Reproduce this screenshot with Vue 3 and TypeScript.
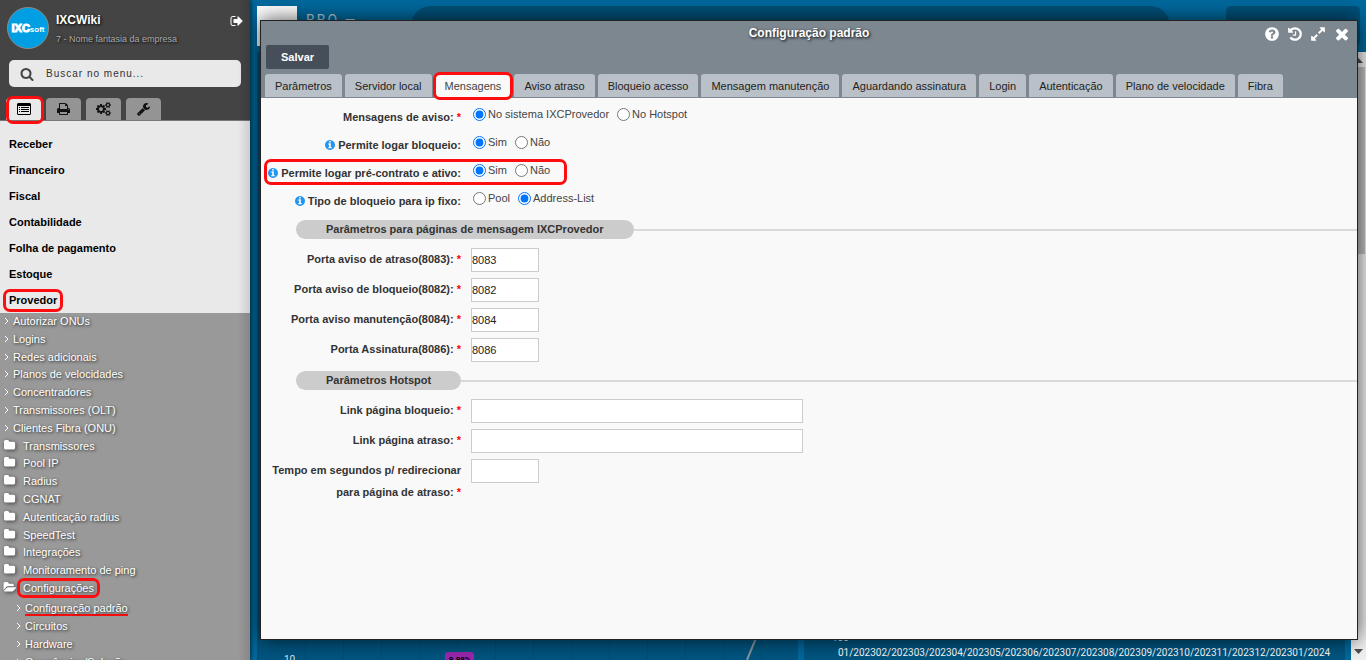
<script setup lang="ts">
import { ref } from 'vue'

interface MenuLink {
  label: string
  icon: 'arrow' | 'folder' | 'open'
  marked?: boolean
}

interface RadioRow {
  name: string
  label: string
  required?: boolean
  info?: boolean
  marked?: boolean
  options: string[]
}

interface FieldRow {
  id: string
  label: string
  wide?: boolean
}

const circle =
  'm640 416q0 209-103 385.5t-279.5 279.5-385.5 103-385.5-103-279.5-279.5-103-385.5 103-385.5 279.5-279.5 385.5-103 385.5 103 279.5 279.5 103 385.5z'

const icons = {
  exit: 'M704 1440q0 4 1 20t.5 26.5-3 23.5-10 19.5-20.5 6.5h-320q-119 0-203.5-84.5t-84.5-203.5v-704q0-119 84.5-203.5t203.5-84.5h320q13 0 22.5 9.5t9.5 22.5q0 4 1 20t.5 26.5-3 23.5-10 19.5-20.5 6.5h-320q-66 0-113 47t-47 113v704q0 66 47 113t113 47h312l11.5 1 11.5 3 8 5.5 7 9 2 13.5zm928-544q0 26-19 45l-544 544q-19 19-45 19t-45-19-19-45v-288h-448q-26 0-45-19t-19-45v-384q0-26 19-45t45-19h448v-288q0-26 19-45t45-19 45 19l544 544q19 19 19 45z',
  search:
    'M1216 832q0-185-131.5-316.5t-316.5-131.5-316.5 131.5-131.5 316.5 131.5 316.5 316.5 131.5 316.5-131.5 131.5-316.5zm512 832q0 52-38 90t-90 38q-54 0-90-38l-343-342q-179 124-399 124-143 0-273.5-55.5t-225-150-150-225-55.5-273.5 55.5-273.5 150-225 225-150 273.5-55.5 273.5 55.5 225 150 150 225 55.5 273.5q0 220-124 399l343 343q37 37 37 90z',
  folder:
    'M1728 608v704q0 92-66 158t-158 66h-1216q-92 0-158-66t-66-158v-960q0-92 66-158t158-66h320q92 0 158 66t66 158v32h672q92 0 158 66t66 158z',
  open: 'M1879 952q0 31-31 66l-336 396q-43 51-120.5 86.5t-143.5 35.5h-1088q-34 0-60.5-13t-26.5-43q0-31 31-66l336-396q43-51 120.5-86.5t143.5-35.5h1088q34 0 60.5 13t26.5 43zm-343-344v160h-832q-94 0-197 47.5t-164 119.5l-337 396-5 6q0-4-.5-12.5t-.5-12.5v-960q0-92 66-158t158-66h320q92 0 158 66t66 158v32h544q92 0 158 66t66 158z',
  print:
    'M448 1536h896v-256h-896v256zm0-640h896v-384h-160q-40 0-68-28t-28-68v-160h-640v640zm1152 64q0-26-19-45t-45-19-45 19-19 45 19 45 45 19 45-19 19-45zm128 0v416q0 13-9.5 22.5t-22.5 9.5h-224v160q0 40-28 68t-68 28h-960q-40 0-68-28t-28-68v-160h-224q-13 0-22.5-9.5t-9.5-22.5v-416q0-79 56.5-135.5t135.5-56.5h64v-544q0-40 28-68t68-28h672q40 0 88 20t76 48l152 152q28 28 48 76t20 88v256h64q79 0 135.5 56.5t56.5 135.5z',
  wrench:
    'M448 1472q0-26-19-45t-45-19-45 19-19 45 19 45 45 19 45-19 19-45zm644-420l-682 682q-37 37-90 37-52 0-91-37l-106-108q-38-36-38-90 0-53 38-91l681-681q39 98 114.5 173.5t173.5 114.5zm634-435q0 39-23 106-47 134-164.5 217.5t-258.5 83.5q-185 0-316.5-131.5t-131.5-316.5 131.5-316.5 316.5-131.5q58 0 121.5 16.5t107.5 46.5q16 11 16 28t-16 28l-293 169v224l193 107q5-3 79-48.5t135.5-81 70.5-35.5q15 0 23.5 10t8.5 25z',
  cogs: 'M896 896q0-106-75-181t-181-75-181 75-75 181 75 181 181 75 181-75 75-181zm768 512q0-52-38-90t-90-38-90 38-38 90q0 53 37.5 90.5t90.5 37.5 90.5-37.5 37.5-90.5zm0-1024q0-52-38-90t-90-38-90 38-38 90q0 53 37.5 90.5t90.5 37.5 90.5-37.5 37.5-90.5zm-384 421v185q0 10-7 19.5t-16 10.5l-155 24q-11 35-32 76 34 48 90 115 7 11 7 20 0 12-7 19-23 30-82.5 89.5t-78.5 59.5q-11 0-21-7l-115-90q-37 19-77 31-11 108-23 155-7 24-30 24h-186q-11 0-20-7.5t-10-17.5l-23-153q-34-10-75-31l-118 89q-7 7-20 7-11 0-21-8-144-133-144-160 0-9 7-19 10-14 41-53t47-61q-23-44-35-82l-152-24q-10-1-17-9.5t-7-19.5v-185q0-10 7-19.5t16-10.5l155-24q11-35 32-76-34-48-90-115-7-11-7-20 0-12 7-20 22-30 82-89t79-59q11 0 21 7l115 90q34-18 77-32 11-108 23-154 7-24 30-24h186q11 0 20 7.5t10 17.5l23 153q34 10 75 31l118-89q8-7 20-7 11 0 21 8 144 133 144 160 0 8-7 19-12 16-42 54t-45 60q23 48 34 82l152 23q10 2 17 10.5t7 19.5zm640 533v140q0 16-149 31-12 27-30 52 51 113 51 138 0 4-4 7-122 71-124 71-8 0-46-47t-52-68q-20 2-30 2t-30-2q-14 21-52 68t-46 47q-2 0-124-71-4-3-4-7 0-25 51-138-18-25-30-52-149-15-149-31v-140q0-16 149-31 13-29 30-52-51-113-51-138 0-4 4-7 4-2 35-20t59-34 30-16q8 0 46 46.5t52 67.5q20-2 30-2t30 2q51-71 92-112l6-2q4 0 124 70 4 3 4 7 0 25-51 138 17 23 30 52 149 15 149 31zm0-1024v140q0 16-149 31-12 27-30 52 51 113 51 138 0 4-4 7-122 71-124 71-8 0-46-47t-52-68q-20 2-30 2t-30-2q-14 21-52 68t-46 47q-2 0-124-71-4-3-4-7 0-25 51-138-18-25-30-52-149-15-149-31v-140q0-16 149-31 13-29 30-52-51-113-51-138 0-4 4-7 4-2 35-20t59-34 30-16q8 0 46 46.5t52 67.5q20-2 30-2t30 2q51-71 92-112l6-2q4 0 124 70 4 3 4 7 0 25-51 138 17 23 30 52 149 15 149 31z',
  info:
    'M1152 1376v-160q0-14-9-23t-23-9h-96v-512q0-14-9-23t-23-9h-320q-14 0-23 9t-9 23v160q0 14 9 23t23 9h96v320h-96q-14 0-23 9t-9 23v160q0 14 9 23t23 9h448q14 0 23-9t9-23zm-128-896v-160q0-14-9-23t-23-9h-192q-14 0-23 9t-9 23v160q0 14 9 23t23 9h192q14 0 23-9t9-23z' +
    circle,
  help: 'M1024 1376v-192q0-14-9-23t-23-9h-192q-14 0-23 9t-9 23v192q0 14 9 23t23 9h192q14 0 23-9t9-23zm256-672q0-88-55.5-163t-138.5-116-170-41q-243 0-371 213-15 24 8 42l132 100q7 6 19 6 16 0 25-12 53-68 86-92 34-24 86-24 48 0 85.5 26t37.5 59q0 38-20 61t-68 45q-63 28-115.5 86.5t-52.5 125.5v36q0 14 9 23t23 9h192q14 0 23-9t9-23q0-19 21.5-49.5t54.5-49.5q32-18 49-28.5t46-35 44.5-48 28-60.5 12.5-81zm384 192q0 209-103 385.5t-279.5 279.5-385.5 103-385.5-103-279.5-279.5-103-385.5 103-385.5 279.5-279.5 385.5-103 385.5 103 279.5 279.5 103 385.5z',
  history:
    'M1664 896q0 156-61 298t-164 245-245 164-298 61q-172 0-327-72.5t-264-204.5q-7-10-6.5-22.5t8.5-20.5l137-138q10-9 25-9 16 2 23 12 73 95 179 147t225 52q104 0 198.5-40.5t163.5-109.5 109.5-163.5 40.5-198.5-40.5-198.5-109.5-163.5-163.5-109.5-198.5-40.5q-98 0-188 35.5t-160 101.5l137 138q31 30 14 69-17 40-59 40h-448q-26 0-45-19t-19-45v-448q0-42 40-59 39-17 69 14l130 129q107-101 244.5-156.5t284.5-55.5q156 0 298 61t245 164 164 245 61 298zm-640-288v448q0 14-9 23t-23 9h-320q-14 0-23-9t-9-23v-64q0-14 9-23t23-9h224v-352q0-14 9-23t23-9h64q14 0 23 9t9 23z',
  expand:
    'M883 1056q0 13-10 23l-332 332 144 144q19 19 19 45t-19 45-45 19h-448q-26 0-45-19t-19-45v-448q0-26 19-45t45-19 45 19l144 144 332-332q10-10 23-10t23 10l114 114q10 10 10 23zm781-864v448q0 26-19 45t-45 19-45-19l-144-144-332 332q-10 10-23 10t-23-10l-114-114q-10-10-10-23t10-23l332-332-144-144q-19-19-19-45t19-45 45-19h448q26 0 45 19t19 45z',
  close:
    'M1490 1322q0 40-28 68l-136 136q-28 28-68 28t-68-28l-294-294-294 294q-28 28-68 28t-68-28l-136-136q-28-28-28-68t28-68l294-294-294-294q-28-28-28-68t28-68l136-136q28-28 68-28t68 28l294 294 294-294q28-28 68-28t68 28l136 136q28 28 28 68t-28 68l-294 294 294 294q28 28 28 68z',
}

const modules = ['Receber', 'Financeiro', 'Fiscal', 'Contabilidade', 'Folha de pagamento', 'Estoque', 'Provedor']

const links: MenuLink[] = [
  { label: 'Autorizar ONUs', icon: 'arrow' },
  { label: 'Logins', icon: 'arrow' },
  { label: 'Redes adicionais', icon: 'arrow' },
  { label: 'Planos de velocidades', icon: 'arrow' },
  { label: 'Concentradores', icon: 'arrow' },
  { label: 'Transmissores (OLT)', icon: 'arrow' },
  { label: 'Clientes Fibra (ONU)', icon: 'arrow' },
  { label: 'Transmissores', icon: 'folder' },
  { label: 'Pool IP', icon: 'folder' },
  { label: 'Radius', icon: 'folder' },
  { label: 'CGNAT', icon: 'folder' },
  { label: 'Autenticação radius', icon: 'folder' },
  { label: 'SpeedTest', icon: 'folder' },
  { label: 'Integrações', icon: 'folder' },
  { label: 'Monitoramento de ping', icon: 'folder' },
  { label: 'Configurações', icon: 'open', marked: true },
]

const subLinks = ['Configuração padrão', 'Circuitos', 'Hardware', 'Ocorrências/Solução']

const tabs = [
  'Parâmetros',
  'Servidor local',
  'Mensagens',
  'Aviso atraso',
  'Bloqueio acesso',
  'Mensagem manutenção',
  'Aguardando assinatura',
  'Login',
  'Autenticação',
  'Plano de velocidade',
  'Fibra',
]
const activeTab = ref('Mensagens')

const radioRows: RadioRow[] = [
  { name: 'aviso', label: 'Mensagens de aviso:', required: true, options: ['No sistema IXCProvedor', 'No Hotspot'] },
  { name: 'bloqueio', label: 'Permite logar bloqueio:', info: true, options: ['Sim', 'Não'] },
  { name: 'precontrato', label: 'Permite logar pré-contrato e ativo:', info: true, marked: true, options: ['Sim', 'Não'] },
  { name: 'ipfixo', label: 'Tipo de bloqueio para ip fixo:', info: true, options: ['Pool', 'Address-List'] },
]
const choices = ref<Record<string, string>>({
  aviso: 'No sistema IXCProvedor',
  bloqueio: 'Sim',
  precontrato: 'Sim',
  ipfixo: 'Address-List',
})

const ports: FieldRow[] = [
  { id: 'porta8083', label: 'Porta aviso de atraso(8083):' },
  { id: 'porta8082', label: 'Porta aviso de bloqueio(8082):' },
  { id: 'porta8084', label: 'Porta aviso manutenção(8084):' },
  { id: 'porta8086', label: 'Porta Assinatura(8086):' },
]
const hotspot: FieldRow[] = [
  { id: 'linkBloqueio', label: 'Link página bloqueio:', wide: true },
  { id: 'linkAtraso', label: 'Link página atraso:', wide: true },
  { id: 'tempo', label: 'Tempo em segundos p/ redirecionar para página de atraso:' },
]
const groups = [
  { title: 'Parâmetros para páginas de mensagem IXCProvedor', rows: ports },
  { title: 'Parâmetros Hotspot', rows: hotspot },
]
const values = ref<Record<string, string>>({
  porta8083: '8083',
  porta8082: '8082',
  porta8084: '8084',
  porta8086: '8086',
  linkBloqueio: '',
  linkAtraso: '',
  tempo: '',
})

const months = [
  '01/2023', '02/2023', '03/2023', '04/2023', '05/2023', '06/2023', '07/2023',
  '08/2023', '09/2023', '10/2023', '11/2023', '12/2023', '01/2024',
]
const windowActions = [
  { icon: icons.help, label: 'Ajuda' },
  { icon: icons.history, label: 'Histórico' },
  { icon: icons.expand, label: 'Expandir' },
  { icon: icons.close, label: 'Fechar', big: true },
]
</script>

<template>
  <div class="app">
    <aside class="sidebar">
      <header class="side-top">
        <div class="user">
          <div class="avatar"><span class="brand">IXC</span><span class="brand-small">soft</span></div>
          <div class="user-text">
            <strong>IXCWiki</strong>
            <span>7 - Nome fantasia da empresa</span>
          </div>
          <button class="icon-btn exit" aria-label="Sair">
            <svg viewBox="0 0 1792 1792"><path :d="icons.exit" /></svg>
          </button>
        </div>
        <div class="search">
          <svg viewBox="0 0 1792 1792"><path :d="icons.search" /></svg>
          <input type="text" placeholder="Buscar no menu..." aria-label="Buscar no menu" />
        </div>
        <div class="side-tabs">
          <button class="side-tab current ring" aria-label="Menu">
            <svg class="list-icon" viewBox="0 0 14 12">
              <path fill-rule="evenodd" d="M1 0h12l1 1v10l-1 1H1l-1-1V1zM1 3v8h12V3z" />
              <path d="M2 4h1v1H2zM4 4h8v1H4zM2 6h1v1H2zM4 6h8v1H4zM2 8h1v1H2zM4 8h8v1H4z" />
            </svg>
          </button>
          <button class="side-tab" aria-label="Imprimir">
            <svg viewBox="0 0 1792 1792"><path :d="icons.print" /></svg>
          </button>
          <button class="side-tab" aria-label="Ajustes">
            <svg viewBox="0 0 1920 1792"><path :d="icons.cogs" /></svg>
          </button>
          <button class="side-tab" aria-label="Ferramentas">
            <svg viewBox="0 0 1792 1792"><path :d="icons.wrench" /></svg>
          </button>
        </div>
      </header>
      <nav class="side-menu">
        <ul class="modules">
          <li v-for="m in modules" :key="m">
            <a href="#" :class="{ ring: m === 'Provedor', roomy: m === 'Provedor' }">{{ m }}</a>
          </li>
        </ul>
        <div class="branch">
          <ul class="links">
            <li v-for="l in links" :key="l.label" :class="l.icon">
              <svg v-if="l.icon === 'arrow'" class="chevron" viewBox="0 0 5 8"><path d="M1 1l3 3-3 3" /></svg>
              <svg v-else class="folder-icon" viewBox="64 128 1792 1792">
                <path :d="l.icon === 'open' ? icons.open : icons.folder" />
              </svg>
              <a href="#" :class="{ ring: l.marked }">{{ l.label }}</a>
            </li>
          </ul>
          <ul class="sub-links">
            <li v-for="(s, i) in subLinks" :key="s">
              <svg class="chevron" viewBox="0 0 5 8"><path d="M1 1l3 3-3 3" /></svg>
              <a href="#" :class="{ underlined: i === 0 }">{{ s }}</a>
            </li>
          </ul>
        </div>
      </nav>
    </aside>

    <main class="workspace">
      <div class="dashboard">
        <div class="dash-top">
          <div class="dash-logo"></div>
          <span class="dash-name">BBO —</span>
          <div class="dash-search"></div>
          <div class="dash-user"></div>
        </div>
        <div class="dash-body">
          <div class="charts">
            <section class="chart chart-left">
              <div class="chart-grid"></div>
              <div class="chart-foot">
                <span class="tick">10</span>
                <span class="badge">9.98%</span>
                <svg class="trend" viewBox="0 0 12 22"><path d="M10 0L1 22" /></svg>
              </div>
            </section>
            <section class="chart">
              <div class="chart-grid"></div>
              <div class="axis">
                <span class="axis-zero">100</span>
                <div class="months"><span v-for="m in months" :key="m">{{ m }}</span></div>
              </div>
            </section>
          </div>
          <div class="scroll">
            <svg viewBox="0 0 9 5"><path d="M0 5L4.500 0 9 5z" /></svg>
            <div class="thumb"></div>
            <svg class="down" viewBox="0 0 9 5"><path d="M0 0L4.500 5 9 0z" /></svg>
          </div>
        </div>
      </div>

      <section class="window" role="dialog" aria-labelledby="window-title">
        <header class="window-top">
          <div class="title-bar">
            <h1 id="window-title">Configuração padrão</h1>
            <div class="actions">
              <button v-for="a in windowActions" :key="a.label" class="icon-btn" :class="{ big: a.big }" :aria-label="a.label">
                <svg viewBox="0 0 1792 1792"><path :d="a.icon" /></svg>
              </button>
            </div>
          </div>
          <button class="save">Salvar</button>
          <div class="tabs" role="tablist">
            <button
              v-for="t in tabs"
              :key="t"
              class="tab"
              role="tab"
              :aria-selected="t === activeTab"
              :class="{ active: t === activeTab, ring: t === activeTab }"
              @click="activeTab = t"
            >
              {{ t }}
            </button>
          </div>
        </header>

        <form class="form" @submit.prevent>
          <div class="radios">
            <div v-for="r in radioRows" :key="r.name" class="radio-row">
              <div class="radio-inner" :class="{ marked: r.marked }" role="radiogroup" :aria-labelledby="r.name + '-label'">
                <span :id="r.name + '-label'" class="label">
                  <svg v-if="r.info" class="info" viewBox="128 128 1536 1536"><path :d="icons.info" /></svg>
                  <span>{{ r.label }}<span v-if="r.required" class="star"> *</span></span>
                </span>
                <div class="options">
                  <label v-for="o in r.options" :key="o">
                    <input v-model="choices[r.name]" type="radio" :name="r.name" :value="o" />{{ o }}
                  </label>
                </div>
              </div>
            </div>
          </div>
          <section v-for="g in groups" :key="g.title">
            <h2 class="divider"><span>{{ g.title }}</span></h2>
            <div v-for="f in g.rows" :key="f.id" class="field">
              <label class="label" :for="f.id">{{ f.label }}<span class="star"> *</span></label>
              <input :id="f.id" v-model="values[f.id]" type="text" :class="{ wide: f.wide }" />
            </div>
          </section>
        </form>
      </section>
    </main>
  </div>
</template>

<style>
body {
  margin: 0;
  overflow: hidden;
}
</style>

<style scoped>
.app {
  display: flex;
  height: 100vh;
  overflow: hidden;
  font: 11px "Liberation Sans", Arial, sans-serif;
  color: #333;
}
.app * {
  box-sizing: border-box;
}
button,
input {
  font: inherit;
  color: inherit;
}
button {
  border: 0;
  padding: 0;
  background: none;
  cursor: pointer;
}
a {
  color: inherit;
  text-decoration: none;
}
ul {
  list-style: none;
  margin: 0;
  padding: 0;
}
svg {
  display: block;
  fill: currentColor;
  flex: none;
}
.ring {
  position: relative;
}
.ring::after {
  content: "";
  position: absolute;
  inset: -2px;
  border: 3px solid #fd0d0d;
  border-radius: 7px;
  pointer-events: none;
}

/* Sidebar */
.sidebar {
  width: 250px;
  flex: none;
  display: flex;
  flex-direction: column;
  position: relative;
  z-index: 1;
  background: #e9e9e9;
  box-shadow: 1px 0 4px rgba(0, 0, 0, 0.6);
}
.sidebar::after {
  content: "";
  position: absolute;
  inset: 0 0 0 auto;
  width: 12px;
  background: linear-gradient(to right, transparent, rgba(0, 0, 0, 0.12));
  pointer-events: none;
}
.side-top {
  background: #444;
  border-bottom: 1px solid #777;
  flex: none;
}
.user {
  display: flex;
  padding: 7px 6px 0 7px;
  height: 60px;
}
.avatar {
  width: 42px;
  height: 42px;
  border-radius: 50%;
  background: #009fe3;
  border: 1px solid #8a8a8a;
  color: #fff;
  display: flex;
  align-items: baseline;
  justify-content: center;
  line-height: 40px;
  flex: none;
}
.brand {
  font-size: 11px;
  font-weight: bold;
  -webkit-text-stroke: 1px #fff;
}
.brand-small {
  font-size: 8px;
  font-weight: bold;
}
.user-text {
  flex: 1;
  padding: 4px 0 0 7px;
  display: flex;
  flex-direction: column;
  text-shadow: 1px 1px 3px #000;
}
.user-text strong {
  font-size: 12px;
  line-height: 18px;
  color: #fff;
}
.user-text span {
  font-size: 9px;
  line-height: 20px;
  color: #aaa;
}
.icon-btn {
  width: 16px;
  height: 16px;
  color: #fff;
}
.icon-btn svg {
  width: 16px;
  height: 16px;
}
.exit {
  width: 14px;
  margin-top: 6px;
}
.exit svg {
  width: 14px;
}
.search {
  display: flex;
  align-items: center;
  gap: 12px;
  height: 27px;
  margin: 0 9px;
  padding: 0 11px;
  background: #e9e9e9;
  border-radius: 5px;
  color: #444;
}
.search svg {
  width: 14px;
  height: 14px;
}
.search input {
  flex: 1;
  min-width: 0;
  border: 0;
  padding: 0;
  background: none;
  outline: 0;
  font-size: 10px;
  letter-spacing: 1px;
}
.search input::placeholder {
  color: #333;
  opacity: 1;
}
.side-tabs {
  display: flex;
  gap: 5px;
  padding: 11px 6px 0;
}
.side-tab {
  width: 35px;
  height: 22px;
  display: flex;
  align-items: center;
  justify-content: center;
  background: #949494;
  color: #111;
  border-radius: 4px 4px 0 0;
}
.side-tab svg {
  height: 14px;
  width: 15px;
}
.side-tab .list-icon {
  height: 12px;
  width: 14px;
}
.side-tab.current {
  background: #e9e9e9;
  color: #000;
}
.side-tab.current::after {
  inset: -2px -3px -4px 0;
}
.side-menu {
  flex: 1;
  min-height: 0;
  display: flex;
  flex-direction: column;
}
.modules {
  padding: 10px 9px 0;
  flex: none;
}
.modules li {
  line-height: 26px;
  font-weight: bold;
  color: #000;
}
.modules .roomy::after {
  inset: -5px -6px -6px;
}
.branch {
  flex: 1;
  min-height: 0;
  overflow: hidden;
  background: #999;
  color: #fff;
  text-shadow: 1px 1px 3px rgba(0, 0, 0, 0.8);
}
.links {
  display: flex;
  flex-direction: column;
  height: 285px;
  margin-top: -1px;
}
.links li {
  flex: 1;
  min-height: 0;
  display: flex;
  align-items: center;
  gap: 4px;
  padding-left: 4px;
}
.links .folder,
.links .open {
  gap: 7px;
}
.links .ring::after {
  inset: -4px -6px;
}
.chevron {
  width: 5px;
  height: 8px;
  fill: none;
  stroke: #fff;
}
.folder-icon {
  width: 12px;
  height: 12px;
  overflow: visible;
  filter: drop-shadow(1px 1px 2px rgba(0, 0, 0, 0.6));
}
.sub-links {
  padding-top: 2px;
}
.sub-links li {
  display: flex;
  align-items: center;
  gap: 4px;
  height: 18px;
  padding-left: 16px;
}
.underlined {
  box-shadow: 0 2px 0 #fd0d0d;
}

/* Dashboard behind the window */
.workspace {
  flex: 1;
  min-width: 0;
  position: relative;
}
.dashboard {
  height: 100%;
  display: flex;
  flex-direction: column;
  background: #00699e;
}
.dash-top {
  height: 52px;
  flex: none;
  display: flex;
  gap: 9px;
  padding: 6px 6px 0 7px;
}
.dash-logo {
  width: 40px;
  height: 40px;
  background: #fff;
}
.dash-name {
  width: 96px;
  padding-top: 6px;
  font: 14px/16px Roboto, sans-serif;
  letter-spacing: 2px;
  color: #b5cfdd;
}
.dash-search {
  flex: 1;
  height: 40px;
  margin-right: 47px;
  border-radius: 20px;
  background: #005079;
}
.dash-user {
  width: 134px;
  height: 40px;
  border-radius: 5px;
  background: #005079;
}
.dash-body {
  flex: 1;
  min-height: 0;
  display: flex;
}
.charts {
  flex: 1;
  display: flex;
  gap: 6px;
  padding: 0 6px 0 7px;
}
.chart {
  flex: 1;
  display: flex;
  flex-direction: column;
  background: #005580;
}
.chart-grid {
  flex: 1;
}
.chart-left {
  background: repeating-linear-gradient(to right, #005580 0 37px, #004e76 37px 38px);
  background-position: 11px 0;
}
.chart-foot {
  display: flex;
  align-items: flex-start;
  height: 22px;
  padding: 0 40px 0 27px;
  font: 10px/12px Roboto, sans-serif;
}
.tick {
  color: #dce8ef;
  padding-top: 16px;
}
.badge {
  width: 29px;
  height: 20px;
  margin: 14px auto 0 150px;
  border-radius: 3px;
  background: #9c27b0;
  color: #000;
  font-size: 8px;
  line-height: 16px;
  font-weight: bold;
  text-align: center;
}
.trend {
  width: 12px;
  height: 22px;
  fill: none;
  stroke: #8a979f;
  stroke-width: 2;
}
.axis {
  height: 28px;
  padding: 0 12px 0 34px;
  font: 10px/12px Roboto, sans-serif;
  color: #fff;
}
.axis-zero {
  display: block;
  width: 17px;
  margin-left: -6px;
}
.months {
  display: flex;
  line-height: 18px;
}
.scroll {
  width: 15px;
  display: flex;
  flex-direction: column;
  align-items: center;
  padding: 6px 0 6px;
  background: #f1f1f1;
  color: #505050;
}
.scroll svg {
  width: 9px;
  height: 5px;
}
.thumb {
  width: 13px;
  height: 187px;
  margin-top: 4px;
  background: #c1c1c1;
}
.scroll .down {
  margin-top: auto;
}

/* Window */
.window {
  position: absolute;
  inset: 20px 8px 20px 10px;
  display: flex;
  flex-direction: column;
  background: #f9f9f9;
  border: 1px solid #222;
  box-shadow: 0 0 20px rgba(0, 0, 0, 0.7);
}
.window-top {
  background: #7d8790;
  flex: none;
}
.title-bar {
  display: grid;
  grid-template-columns: 1fr auto 1fr;
  height: 24px;
}
h1 {
  grid-column: 2;
  margin: 0;
  font-size: 12px;
  line-height: 24px;
  color: #fff;
  text-shadow: 1px 1px 3px #000;
}
.actions {
  display: flex;
  align-items: center;
  justify-content: flex-end;
  gap: 7px;
  padding: 2px 6px 0 0;
}
.icon-btn.big,
.icon-btn.big svg {
  width: 18px;
  height: 18px;
}
.save {
  display: block;
  height: 24px;
  margin-left: 5px;
  padding: 0 15px;
  border-radius: 2px;
  background: #464f59;
  color: #fff;
  font-weight: bold;
}
.tabs {
  display: flex;
  gap: 3px;
  height: 29px;
  padding: 5px 4px 0;
}
.tab {
  height: 23px;
  padding: 0 10px;
  border-radius: 3px 3px 0 0;
  background: #bac0c7;
  color: #222;
  white-space: nowrap;
}
.tab.active {
  height: 24px;
  background: #f9f9f9;
  color: #444;
}
.form {
  flex: 1;
  min-height: 0;
  overflow: hidden;
  padding-top: 2px;
}
.radios {
  padding-bottom: 2px;
}
.radio-row {
  display: flex;
  height: 28px;
}
.radio-inner {
  display: flex;
  position: relative;
}
.marked::after {
  content: "";
  position: absolute;
  inset: 3px -17px -1px 3px;
  border: 3px solid #fd0d0d;
  border-radius: 7px;
  pointer-events: none;
}
.label {
  width: 200px;
  padding-left: 10px;
  text-align: right;
  font-weight: bold;
  line-height: 22px;
}
.star {
  color: #f00;
}
.radio-inner .label {
  display: flex;
  justify-content: flex-end;
  align-items: center;
  gap: 3px;
  padding: 6px 0 0;
}
.info {
  width: 10px;
  height: 10px;
  color: #2196f3;
}
.options {
  display: flex;
  align-items: center;
  gap: 8px;
  padding-left: 12px;
}
.options label {
  display: flex;
  align-items: center;
  color: #444;
}
.options input {
  width: 13px;
  height: 13px;
  margin: 0 2px 0 0;
}
.divider {
  display: flex;
  align-items: center;
  margin: 6px 0 6px 35px;
  font-size: 11px;
  line-height: 19px;
}
.divider::after {
  content: "";
  flex: 1;
  height: 2px;
  background: #d9d9d9;
}
.divider span {
  padding: 0 30px;
  border-radius: 10px;
  background: #ccc;
}
.field {
  display: flex;
  align-items: flex-start;
  gap: 10px;
  padding: 3px 0;
}
.field input {
  width: 68px;
  height: 24px;
  padding: 0;
  border: 1px solid #ccc;
  background: #fff;
  color: #222;
}
.field .wide {
  width: 332px;
}
</style>
